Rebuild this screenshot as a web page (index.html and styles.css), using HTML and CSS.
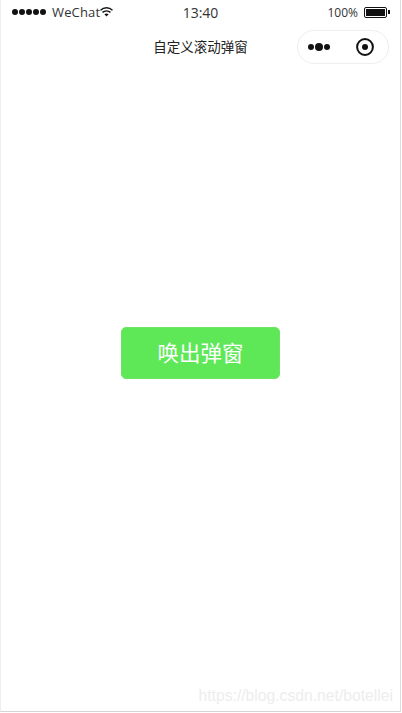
FILE: index.html
```html
<!DOCTYPE html>
<html lang="zh-CN">
<head>
  <meta charset="UTF-8">
  <meta name="viewport" content="width=device-width, initial-scale=1.0">
  <title>自定义滚动弹窗</title>
  <link rel="stylesheet" href="styles.css">
</head>
<body>
  <div class="phone">
    <div class="status-bar">
      <div class="status-left">
        <div class="signal">
          <span></span><span></span><span></span><span></span><span></span>
        </div>
        <span class="carrier">WeChat</span>
        <svg class="wifi" width="13" height="10" viewBox="0 0 13 10">
          <path d="M0.5 3.2C4 0 9 0 12.5 3.2" fill="none" stroke="#111" stroke-width="1.4"/>
          <path d="M2.5 5.4C4.8 3.4 8.2 3.4 10.5 5.4" fill="none" stroke="#111" stroke-width="1.4"/>
          <path d="M4.4 7.3L6.5 9.6L8.6 7.3C7.4 6.2 5.6 6.2 4.4 7.3Z" fill="#111"/>
        </svg>
      </div>
      <div class="status-time">13:40</div>
      <div class="status-right">
        <span class="percent">100%</span>
        <div class="battery"><div class="battery-level"></div></div>
        <div class="battery-tip"></div>
      </div>
    </div>

    <div class="nav-bar">
      <div class="nav-title">自定义滚动弹窗</div>
      <div class="capsule">
        <div class="more">
          <span></span><span class="big"></span><span></span>
        </div>
        <svg class="target" width="20" height="20" viewBox="0 0 20 20">
          <circle cx="10" cy="10" r="7.9" fill="none" stroke="#111" stroke-width="2"/>
          <circle cx="10" cy="10" r="3" fill="#111"/>
        </svg>
      </div>
    </div>

    <div class="content">
      <button type="button" class="open-btn">唤出弹窗</button>
    </div>

    <div class="watermark">https://blog.csdn.net/botellei</div>
  </div>
</body>
</html>
```

FILE: styles.css
```css
* {
  box-sizing: border-box;
}

html,
body {
  margin: 0;
  height: 100%;
  background: #fff;
}

body {
  font-family: "Open Sans", "Noto Sans CJK SC", sans-serif;
  overflow: hidden;
}

.phone {
  position: relative;
  display: flex;
  flex-direction: column;
  width: 401px;
  height: 712px;
  background: #fff;
  border-right: 1px solid #ddd;
  border-bottom: 1px solid #d4d4d4;
  border-left: 1px solid #eee;
}

.status-bar {
  display: grid;
  grid-template-columns: 1fr auto 1fr;
  align-items: center;
  height: 24px;
  padding: 0 10px 0 11px;
  font-size: 13px;
  color: #333;
}

.status-left {
  display: flex;
  align-items: center;
}

.signal {
  display: flex;
  gap: 1px;
  margin-right: 4px;
}

.signal span {
  width: 6px;
  height: 6px;
  border-radius: 50%;
  background: #111;
}

.carrier {
  margin-left: 2px;
  letter-spacing: 0.15px;
}

.wifi {
  margin-left: 0;
}

.status-time {
  margin-left: -1px;
  font-size: 14px;
}

.status-right {
  display: flex;
  align-items: center;
  justify-content: flex-end;
  font-size: 12px;
}

.percent {
  margin-right: 6px;
}

.battery {
  width: 23px;
  height: 11px;
  padding: 1px;
  border: 1px solid #111;
  border-radius: 2px;
}

.battery-level {
  height: 100%;
  background: #111;
}

.battery-tip {
  width: 2px;
  height: 4px;
  margin-left: 1px;
  background: #111;
}

.nav-bar {
  display: flex;
  align-items: center;
  justify-content: center;
  position: relative;
  height: 44px;
}

.nav-title {
  margin-top: -1px;
  font-size: 13.5px;
  color: #222;
}

.capsule {
  position: absolute;
  top: 6px;
  right: 11px;
  display: flex;
  align-items: center;
  justify-content: space-between;
  width: 92px;
  height: 34px;
  padding: 0 13px 0 10px;
  border: 1px solid #eee;
  border-radius: 17px;
}

.more {
  display: flex;
  align-items: center;
  gap: 1px;
}

.more span {
  width: 6px;
  height: 6px;
  border-radius: 50%;
  background: #111;
}

.more .big {
  width: 8px;
  height: 8px;
}

.content {
  flex: 1;
  display: flex;
  justify-content: center;
  padding-top: 259px;
}

.open-btn {
  width: 159px;
  height: 52px;
  padding: 0 0 3px;
  border: 1px solid #6be563;
  border-radius: 5px;
  background: #5ee858;
  color: #fff;
  font-family: inherit;
  font-size: 21.5px;
}

.watermark {
  position: absolute;
  right: 7px;
  bottom: 6px;
  font-family: "Liberation Sans", sans-serif;
  font-size: 15.7px;
  color: #ededed;
}
```
